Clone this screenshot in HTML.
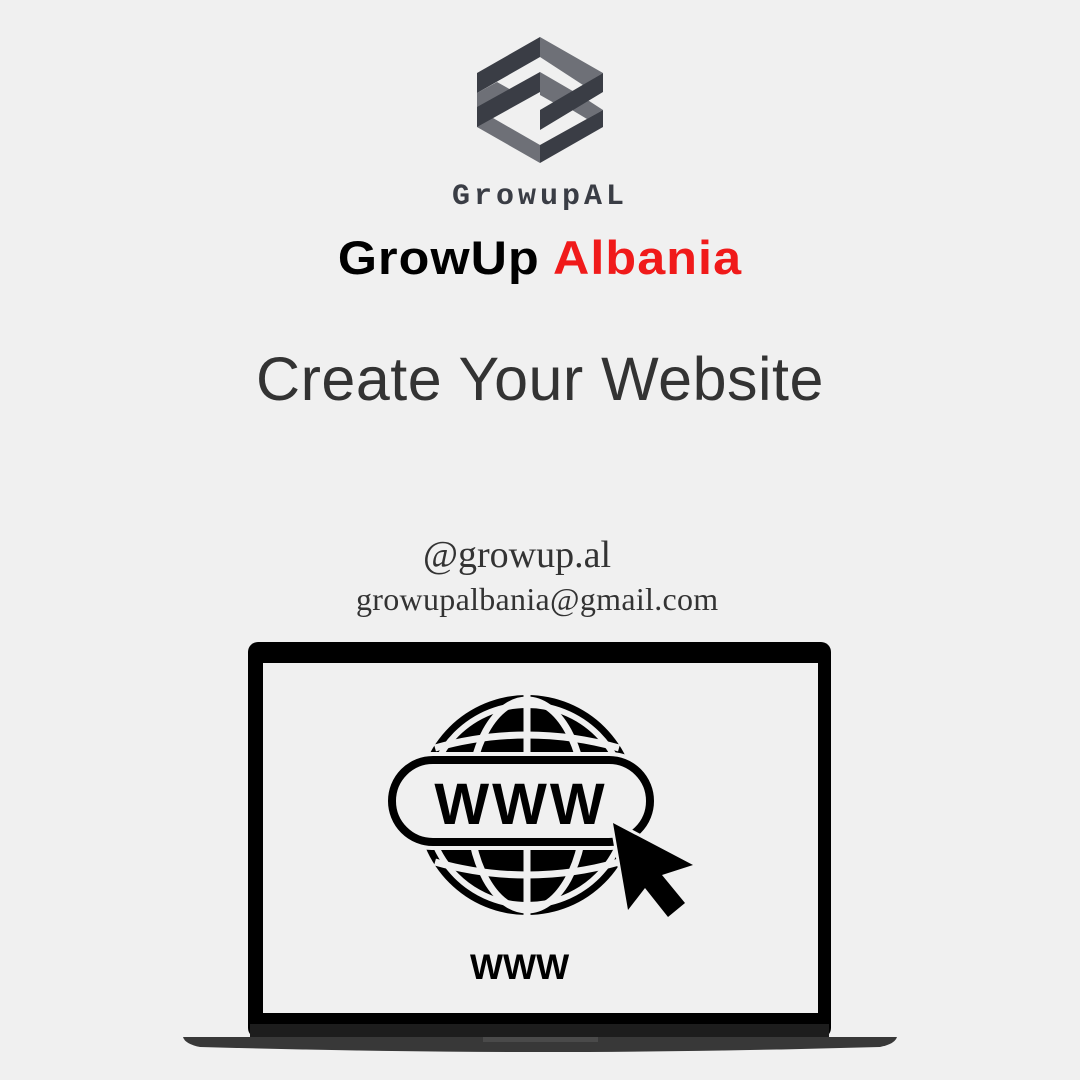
<!DOCTYPE html>
<html><head><meta charset="utf-8"><style>
html,body{margin:0;padding:0;background:#f0f0f0;}
body{width:1080px;height:1080px;position:relative;overflow:hidden;font-family:"Liberation Sans",sans-serif;}
.t{position:absolute;left:0;width:1080px;text-align:center;white-space:nowrap;}
</style></head><body>
<svg width="1080" height="1080" style="position:absolute;left:0;top:0">
<g>
<polygon points="477,93 497,82 520,95 500,107 477,107" fill="#6e7077"/>
<polygon points="477,127 540,163 540,145 493,118 477,118" fill="#6e7077"/>
<polygon points="540,37 603,73 583,85 540,57" fill="#6e7077"/>
<polygon points="540,72 583,97 563,108 540,95" fill="#6e7077"/>
<polygon points="583,97 603,110 587,119 567,107" fill="#6e7077"/>
<polygon points="477,73 540,37 540,57 477,93" fill="#3a3d45"/>
<polygon points="603,73 603,92 540,130 540,110" fill="#3a3d45"/>
<polygon points="477,107 540,72 540,92 477,127" fill="#3a3d45"/>
<polygon points="540,145 603,110 603,127 540,163" fill="#3a3d45"/>
</g>
<rect x="248" y="642" width="583" height="396" rx="10" fill="#000"/>
<rect x="250" y="1024" width="579" height="14" fill="#1d1d1d"/>
<rect x="263" y="663" width="555" height="350" fill="#f0f0f0"/>
<path d="M183,1037 H897 Q895,1044 880,1047 Q700,1052 540,1052 Q380,1052 200,1047 Q185,1044 183,1037Z" fill="#383838"/>
<rect x="483" y="1037" width="115" height="5" fill="#4a4a4a"/>
<circle cx="527" cy="805" r="110" fill="#000"/>
<circle cx="527" cy="805" r="100" fill="none" stroke="#f0f0f0" stroke-width="6"/>
<g fill="none" stroke="#f0f0f0" stroke-width="7">
<line x1="527" y1="695" x2="527" y2="915"/>
<ellipse cx="527" cy="805" rx="58" ry="105"/>
<path d="M435,748 Q527,722 619,748"/>
<path d="M435,862 Q527,888 619,862"/>
</g>
<rect x="383" y="752" width="276" height="98" rx="49" fill="#f0f0f0"/>
<rect x="392" y="760" width="258" height="82" rx="41" fill="#f0f0f0" stroke="#000" stroke-width="8"/>
<text x="521" y="824" text-anchor="middle" font-family="Liberation Sans" font-weight="bold" font-size="58" letter-spacing="3" fill="#000">WWW</text>
<polygon points="613,823 693,865 662,875 685,903 668,917 645,888 628,910" fill="#000" stroke="#f0f0f0" stroke-width="6" stroke-linejoin="round"/>
<polygon points="613,823 693,865 662,875 685,903 668,917 645,888 628,910" fill="#000"/>
</svg>
<div class="t" style="top:180px;font-family:'Liberation Mono',monospace;font-size:30px;font-weight:bold;letter-spacing:4px;color:#3a3d45;">GrowupAL</div>
<div class="t" style="top:230px;font-size:47px;font-weight:bold;color:#000;letter-spacing:1px;transform:scaleX(1.07);">GrowUp <span style="color:#f01a1a">Albania</span></div>
<div class="t" style="top:344px;font-size:61px;color:#333;letter-spacing:0.5px;">Create Your Website</div>
<div style="position:absolute;left:423px;top:533px;font-family:'Liberation Serif',serif;font-size:38px;color:#333;">@growup.al</div>
<div style="position:absolute;left:356px;top:581px;font-family:'Liberation Serif',serif;font-size:32px;color:#333;letter-spacing:0.3px;">growupalbania@gmail.com</div>
<div style="position:absolute;left:470px;top:948px;font-size:35px;font-weight:bold;color:#000;">WWW</div>
</body></html>
